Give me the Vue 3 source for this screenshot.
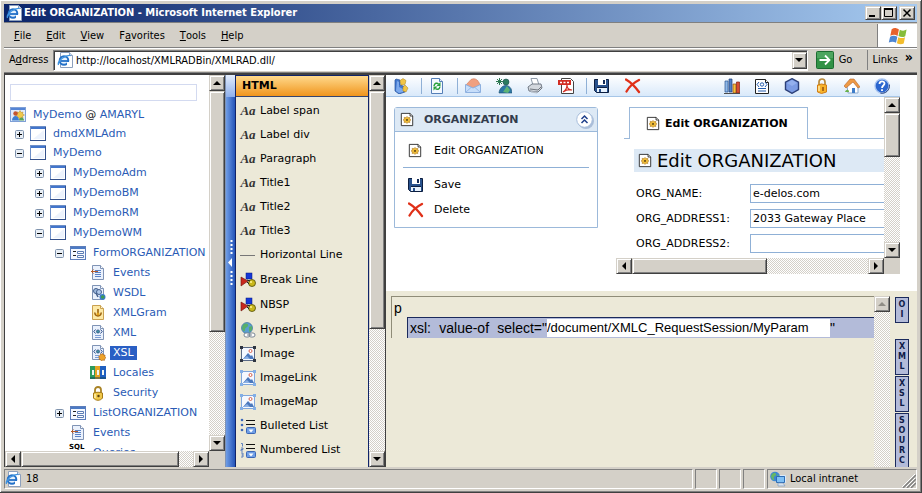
<script setup>
import { ref } from 'vue'

const page = '<path d="M2.500 .5h8l3 3v11h-11z" fill="#eaf1fc" stroke="#7f93b5"/><path d="M10.500 .5v3h3" fill="#fff" stroke="#7f93b5"/>'
const darkPage = '<path d="M1.500 1.500h10l3 3v11h-13z" fill="#fff" stroke="#222"/><path d="M11.500 1.500v3h3" fill="#fff" stroke="#222"/>'
const ieMark = '<circle cx="7" cy="8.500" r="4.300" fill="#e6f1fc" stroke="#2471c8" stroke-width="2"/><path d="M4 9h7.500" stroke="#2471c8" stroke-width="1.800"/><path d="M10 10h4v3h-4z" fill="#fff"/><path d="M1.500 13C0 9 8 3 13.500 3.500" fill="none" stroke="#3d93e0" stroke-width="1.300"/>'
const docLines = '<path d="M5 5.500h6M5 7.500h6M5 9.500h6M5 11.500h6" stroke="#5b83c7"/>'
const picture = (c, n) => `<rect x="1.500" y="1.500" width="13" height="13" fill="#f4f8ff" stroke="${c}"/><path d="M3 13l5-6 3 3 1-1 2 4z" fill="#4a78bd"/><path d="M3 13l4-3 3 3z" fill="#8cb1e5"/><circle cx="10.500" cy="5" r="1.500" fill="#fff" stroke="#d8624b"/><path d="M0 0h3v3H0zM13 0h3v3h-3zM0 13h3v3H0zM13 13h3v3h-3z" fill="${n}"/>`
const shapes = '<path d="M1 5l7 4-7 5z" fill="#c8281e" stroke="#6d120c" stroke-width=".6"/><rect x="6" y="1" width="6" height="6" fill="#1638d8" stroke="#06187a" stroke-width=".5"/><circle cx="12" cy="11" r="3.500" fill="#c9b81c" stroke="#4d4a08" stroke-width=".8"/><circle cx="11" cy="10" r="1.100" fill="#fff28c"/><path d="M7 8l3 1M7 10l2 2" stroke="#222"/>'
const listEnd = '<path d="M6 2.500h9M6 6.500h9" stroke="#111"/><rect x="6.500" y="9.500" width="9" height="6" rx="1" fill="#6f9ee6" stroke="#3b67b5"/><path d="M8.500 11.500h5l-2.500 3z" fill="#fff"/>'

const icons = {
  ie: '<path d="M3.500 .5h9l3 3v12h-12z" fill="#fff" stroke="#8da0bd"/><path d="M12.500 .5v3h3" fill="#dce7f5" stroke="#8da0bd"/>' + ieMark,
  flag: '<path d="M4 3.500C7 1.500 9 2 12 3.800L10.500 11C8 9.500 6 9.300 2.500 10.800z" fill="#e8622c"/><path d="M13 4.200c3 1.500 5 1.200 7.500-.2L19 11.200c-2.500 1.300-4.500 1.200-7.500-.1z" fill="#86bd3a"/><path d="M2.300 11.800C5 10.300 7.500 10.300 10.300 12L8.800 18.500C6 17 4 17 .8 18.300z" fill="#4e86d2"/><path d="M11.300 12.300c3 1.400 5 1.300 7.500 0l-1.500 7c-2.500 1.200-4.500 1.100-7.500-.3z" fill="#f3bd2d"/>',
  go: '<rect x=".5" y=".5" width="17" height="17" rx="1" fill="#329246" stroke="#1c6c31"/><path d="M1 1h16v6H1z" fill="#68b778" opacity=".5"/><path d="M3.500 9h10M9 4.500L13.500 9 9 13.500" fill="none" stroke="#fff" stroke-width="1.800"/>',
  demo: '<rect x=".5" y=".5" width="15" height="14" fill="#e2ecfb" stroke="#7fa0d6"/><path d="M1 1h14v2H1z" fill="#5585d5"/><path d="M10 3.500l1 2 2-.5-.5 2 2 1-2 1 .5 2-2-.5-1 2-1-2-2 .5.5-2-2-1 2-1-.5-2 2 .5z" fill="#f0c84a" stroke="#b98c24" stroke-width=".5"/><circle cx="5.500" cy="6.500" r="2.200" fill="#c3562f"/><path d="M2 13.500c0-6 7-6 7 0z" fill="#3e7ed0"/><path d="M9 13.500c0-4 5-4 5 0z" fill="#58a25a"/>',
  win: '<rect x=".5" y=".5" width="15" height="14" fill="#fff" stroke="#6e8fc7"/><path d="M1 1h14v2H1z" fill="#4275cb"/><path d="M0 14.500h16M15.500 1v14" stroke="#35528c"/><path d="M3 13l11-9v9z" fill="#edf3fd"/>',
  form: '<rect x=".5" y="1.500" width="15" height="13" fill="#f4f8ff" stroke="#5c7dbb"/><path d="M1 2h14v2H1z" fill="#4c7ac4"/><path d="M3 6.500h3M3 10.500h3" stroke="#222"/><path d="M7.500 6.500h6v2h-6zM7.500 10.500h6v2h-6z" fill="#fff" stroke="#5d7db4"/>',
  events: page + docLines + '<path d="M1 6.500h7M3.500 4.500l-2 2 2 2" stroke="#b25a2c" fill="none"/>',
  wsdl: page + '<circle cx="6" cy="6" r="2.500" fill="#9db8dd" stroke="#44608d"/><circle cx="9" cy="7" r="2.500" fill="#b0c9eb" stroke="#44608d"/><path d="M6 8l2 4" stroke="#44608d" stroke-width="1.500"/><circle cx="12.500" cy="12" r="3" fill="#3b7ad0"/><path d="M11 11l2-1 2 2-2 2-2-1z" fill="#3f9a55"/>',
  gram: '<path d="M2.500 .5h8l3 3v11h-11z" fill="#fde9a6" stroke="#c9a050"/><path d="M10.500 .5v3h3" fill="#fff6d8" stroke="#c9a050"/><path d="M8 4v5M5 7.500c-1 4.500 7 4.500 6 0" stroke="#9c6210" stroke-width="1.600" fill="none"/><circle cx="8" cy="9" r="1.500" fill="#e0a01c"/>',
  xml: page + '<path d="M5.500 4.500L3.800 6.500l1.700 2M10.500 4.500l1.700 2-1.700 2" stroke="#2d4f8a" fill="none"/><circle cx="8" cy="6.500" r="1.600" fill="#3c8fa0" stroke="#284a7c" stroke-width=".7"/><path d="M5 10.500h6M5 12.500h6" stroke="#7b9bd3"/>',
  xsl: page + '<path d="M5.500 4.500L3.800 6.500l1.700 2M10.500 4.500l1.700 2-1.700 2" stroke="#2d4f8a" fill="none"/><circle cx="8" cy="6.500" r="1.600" fill="#3c8fa0" stroke="#284a7c" stroke-width=".7"/><path d="M5 10.500h4M5 12.500h4" stroke="#7b9bd3"/><path d="M12.500 8.500l1 1.500 1.500 0 0 1.700 1 1-1.300 1-.2 1.600-1.700-.2-1.200.9-1-1.300-1.600-.4.400-1.600-.7-1.400 1.500-.8.500-1.600 1.600.4z" fill="#efa329" stroke="#a85f13" stroke-width=".6"/>',
  locales: '<path d="M0 1h5v13H0z" fill="#2d9a5d"/><path d="M5 1h5v13H5z" fill="#e5a324"/><path d="M10 1h6v13h-6z" fill="#1f5fc0"/><path d="M2 5h2v5H2zM7 5h2v5H7zM12 5h2v5h-2z" fill="#f0f6f4"/><path d="M0 12h16v2H0z" fill="#164a5e" opacity=".5"/>',
  lock: '<path d="M5 8V5c0-4 6-4 6 0v3" fill="none" stroke="#a98326" stroke-width="1.800"/><path d="M3.500 8c3-1 6-1 9 0v5c-2 3-7 3-9 0z" fill="#f0c84a" stroke="#a57a18"/><path d="M5 9v4" stroke="#fff2b0" stroke-width="1.500"/><circle cx="8.500" cy="11" r="1.200" fill="#5b430f"/>',
  line: '<path d="M0 8.500h15" stroke="#777"/>',
  shapes,
  link: '<circle cx="7" cy="6" r="5.500" fill="#5a9ed0" stroke="#3c7399" stroke-width=".7"/><path d="M3 3c3-3 6-1 5 1s-3 1-3 4-3 0-3-2zM9 5l3-1v4l-3 2z" fill="#57b06a"/><path d="M6 11h2a2 2 0 0 1 0 4H6a2 2 0 0 1 0-4zM11 11h2a2 2 0 0 1 0 4h-2a2 2 0 0 1 0-4z" fill="#fff" stroke="#7a8794"/><path d="M7 13h5" stroke="#7a8794"/>',
  image: picture('#5a6a86', '#2e3440'),
  imageLink: picture('#7fa6dc', '#82aee6'),
  bullets: '<circle cx="2" cy="2" r="1.300" fill="#3c68b8"/><circle cx="2" cy="7" r="1.300" fill="#3c68b8"/><circle cx="2" cy="12" r="1.300" fill="#3c68b8"/>' + listEnd,
  numbers: '<path d="M1 1.500h1.500v3M1 6h2v1.500H1V9h2M1 11h2v2H1.500M3 13v2H1" stroke="#3c68b8" fill="none" stroke-width=".8"/>' + listEnd,
  table: '<path d="M0 6.500h16M4 5l3 4M7 5l-3 4M9 9V5l2 3 2-3v4" stroke="#222" fill="none"/>',
  blue: '<path d="M3 1l4 1v5l6 2-1 5-6 2-4-3V2z" fill="#4379cf" stroke="#24529c" stroke-width=".7"/><path d="M4 3l2 1v5l4 2v3l-4 1-3-2z" fill="#7daaed"/><path d="M7 2.500l3-2 3 2-1 4-4 .5zM10 9l2-2 3 3-2 4-3-1z" fill="#f2c544" stroke="#aa8119" stroke-width=".5"/>',
  refresh: '<path d="M2.500 .5h8l3 3v12h-11z" fill="#f4f9ff" stroke="#557fb7"/><path d="M10.500 .5v3h3" fill="#e4eefb" stroke="#557fb7"/><path d="M5 8c.5-3 3-3.500 4.500-2M11 8.500c-.5 3-3 3.500-4.500 2" fill="none" stroke="#28a03b" stroke-width="1.500"/><path d="M11.500 4v4h-4zM4.500 12.500v-4h4z" fill="#28a03b"/>',
  mail: '<path d="M1 7l5-5.500c4-2 7 0 9 5.500l-7 3z" fill="#f0a080" stroke="#cf7650" stroke-width=".6"/><path d="M.5 6.500L8 10l7.500-3.500v8H.5z" fill="#c7defa" stroke="#8db0df"/><path d="M1 14l5-4.500M15 14l-5-4.500" stroke="#9bbbe6" fill="none"/>',
  people: '<circle cx="10" cy="4" r="3" fill="#2b7b60" stroke="#174b49" stroke-width=".6"/><path d="M3 15c1-10 13-10 13 0z" fill="#2c77a4" stroke="#174b6d" stroke-width=".6"/><path d="M7 14l4-6 3 4-2 3z" fill="#5db476"/><path d="M1 1l5 5M6 1L1 6M0 3.500h7M3.500 0v7" stroke="#2e7a52"/>',
  print: '<path d="M4 .5h6l2 6.500H6z" fill="#fff" stroke="#8f9aa8"/><path d="M1 9l4-3h9l1 4-4 4-9-1z" fill="#d3d8de" stroke="#737b86"/><path d="M3 11l8 1 3-3" stroke="#707780" fill="none"/><path d="M3 13l7 1v1l-6-1z" fill="#fff" stroke="#8f9aa8" stroke-width=".6"/>',
  pdf: '<path d="M3.500 .5h9l3 3v12h-12z" fill="#fff" stroke="#444"/><path d="M0 2h13v5H0z" fill="#d22d23"/><path d="M2 4.500h9" stroke="#fff" stroke-width="1.300" stroke-dasharray="2 1.500"/><path d="M5 14c3-2 4-5 4-7 0 3 2 5 5 5-3-1-6 0-9 2z" fill="none" stroke="#d22d23" stroke-width="1.200"/>',
  save: '<path d="M.5 1.500h14v13H2.500l-2-2z" fill="#28518c" stroke="#0c1e40"/><path d="M4 1h8v6H4z" fill="#fff"/><path d="M9 2h2v4H9z" fill="#132b57"/><path d="M3 9h10v5H3z" fill="#e8f2fd"/><path d="M3 9.500h10" stroke="#0c1e40"/><path d="M5 11h2v3H5z" fill="#28518c"/>',
  del: '<path d="M1 1.500c5 3 9 7 13 12.500M14 2C8 5 4 9 1.500 13.500" fill="none" stroke="#e03018" stroke-width="2.300" stroke-linecap="round"/>',
  books: '<path d="M1 3h3v11H1z" fill="#8fb8e8" stroke="#29558f" stroke-width=".7"/><path d="M5 1h3v13H5z" fill="#4f80c6" stroke="#213f76" stroke-width=".7"/><path d="M9 6h3v9H9z" fill="#f2c23b" stroke="#954410" stroke-width=".7"/><path d="M12.500 4h3v11h-3z" fill="#d84c31" stroke="#822110" stroke-width=".7"/><path d="M0 15.500h16" stroke="#4d4d4d"/>',
  code: darkPage + '<path d="M5 4L3 6.500 5 9M11 4l2 2.500L11 9" fill="none" stroke="#245cae"/><circle cx="8" cy="6.500" r="1.700" fill="#fff" stroke="#245cae"/><path d="M4 10.500h8M4 13h8" stroke="#245cae"/>',
  hex: '<path d="M8 .7l6.500 3.500v7.500L8 15.300 1.500 11.700V4.200z" fill="#7c9ce4" stroke="#2b3f78" stroke-width="1.400"/><path d="M8 2l5 3-5 3-5-3z" fill="#93b0ee"/>',
  padlock: '<path d="M5 8V4c0-4 6-4 6 0v4" fill="none" stroke="#b98a3b" stroke-width="1.700"/><path d="M3.500 7l4-1 5 1v7l-5 1.500-4-1.500z" fill="#f7b32c" stroke="#cf7d18"/><path d="M5 8v5" stroke="#ffe59c" stroke-width="1.600"/><path d="M9 9v4" stroke="#96510c" stroke-width="1.500"/>',
  house: '<path d="M3 8l6-5 5 6v6H4z" fill="#fff" stroke="#8ca9ce"/><path d="M0 8L6 1l4 0 6 8-2 1-5-6-7 6z" fill="#ee9a45" stroke="#b9652a" stroke-width=".6"/><path d="M8 10h3v5H8z" fill="#3e7dc9"/><path d="M1 14c1-3 4-3 4 0z" fill="#69b04a"/>',
  help: '<circle cx="8" cy="8" r="7" fill="#2b66cf" stroke="#a9c5f1" stroke-width="1.300"/><path d="M15.300 6.500a7.300 7.300 0 0 1-9 8.500" fill="none" stroke="#28427e"/><path d="M5.500 6c0-3.500 5-3.300 5-.5C10.500 7.500 8 7.500 8 10M8 11.300v1.800" fill="none" stroke="#fff" stroke-width="1.800"/>',
  net: '<path d="M6.500 4.500h9v7h-9z" fill="#57a3ec" stroke="#dbe9f8"/><circle cx="5" cy="5.500" r="4.800" fill="#3d86d6"/><path d="M1 5c2-5 6-3 5-1s-3 1-2 4-3 0-3-3zM7 3l2 2-1 3z" fill="#67b764"/><path d="M6.500 5.500h8v6h-8z" fill="#7fc0f5" stroke="#2e6db5"/><path d="M8 12h5l2 3H8z" fill="#d8e2ee" stroke="#7794b8" stroke-width=".6"/>',
  chip: darkPage + '<path d="M8 5l1.200 1.500 2-.5-.2 2 1.500 1-1.500 1 .2 2-2-.5L8 13l-1.200-1.500-2 .5.200-2L3.500 9 5 8l-.2-2 2 .5z" fill="#f0bd38" stroke="#b07a1c" stroke-width=".7"/><circle cx="8" cy="9" r="1" fill="#3c2b10"/>',
  sql: '<path d="M5 7h9v9H5z" fill="#f0d581" stroke="#b99836"/>',
}

const menus = [['', 'F', 'ile'], ['', 'E', 'dit'], ['', 'V', 'iew'], ['F', 'a', 'vorites'], ['', 'T', 'ools'], ['', 'H', 'elp']]

const tree = [
  { t: 'dmdXMLAdm', d: 1, i: 'win', e: '+' },
  { t: 'MyDemo', d: 1, i: 'win', e: '-' },
  { t: 'MyDemoAdm', d: 2, i: 'win', e: '+' },
  { t: 'MyDemoBM', d: 2, i: 'win', e: '+' },
  { t: 'MyDemoRM', d: 2, i: 'win', e: '+' },
  { t: 'MyDemoWM', d: 2, i: 'win', e: '-' },
  { t: 'FormORGANIZATION', d: 3, i: 'form', e: '-' },
  { t: 'Events', d: 4, i: 'events' },
  { t: 'WSDL', d: 4, i: 'wsdl' },
  { t: 'XMLGram', d: 4, i: 'gram' },
  { t: 'XML', d: 4, i: 'xml' },
  { t: 'XSL', d: 4, i: 'xsl', on: true },
  { t: 'Locales', d: 4, i: 'locales' },
  { t: 'Security', d: 4, i: 'lock' },
  { t: 'ListORGANIZATION', d: 3, i: 'form', e: '+' },
  { t: 'Events', d: 3, i: 'events' },
  { t: 'Queries', d: 3, i: 'sql' },
]

const palette = [
  ['aa', 'Label span'], ['aa', 'Label div'], ['aa', 'Paragraph'], ['aa', 'Title1'], ['aa', 'Title2'], ['aa', 'Title3'],
  ['line', 'Horizontal Line'], ['shapes', 'Break Line'], ['shapes', 'NBSP'], ['link', 'HyperLink'],
  ['image', 'Image'], ['imageLink', 'ImageLink'], ['imageLink', 'ImageMap'], ['bullets', 'Bulleted List'],
  ['numbers', 'Numbered List'], ['table', ''],
]
const tall = ['shapes', 'link']

const toolsLeft = [['blue'], ['refresh'], ['mail', 'people', 'print', 'pdf'], ['save', 'del']]
const toolsRight = ['books', 'code', 'hex', 'padlock', 'house', 'help']

const fields = ref([
  { id: 'ORG_NAME', v: 'e-delos.com' },
  { id: 'ORG_ADDRESS1', v: '2033 Gateway Place' },
  { id: 'ORG_ADDRESS2', v: '' },
])
const address = ref('http://localhost/XMLRADBin/XMLRAD.dll/')
const filter = ref('')
const param = ref('/document/XMLC_RequestSession/MyParam')
</script>

<template>
  <div class="window">
    <header class="titlebar">
      <svg class="ic" viewBox="0 0 16 16" v-html="icons.ie"></svg>
      <h1>Edit ORGANIZATION - Microsoft Internet Explorer</h1>
      <div class="winbtns">
        <button class="raised" aria-label="Minimize"><svg viewBox="0 0 12 10"><path d="M2 8h6" stroke="#000" stroke-width="2" /></svg></button>
        <button class="raised" aria-label="Maximize"><svg viewBox="0 0 12 10"><path d="M1.500 1v7.500h8V1M1 1h9" fill="none" stroke="#000" /><path d="M1 1h9" stroke="#000" stroke-width="2" /></svg></button>
        <button class="raised close" aria-label="Close"><svg viewBox="0 0 12 10"><path d="M2.500 1.500l7 7M9.500 1.500l-7 7" stroke="#000" stroke-width="1.500" /></svg></button>
      </div>
    </header>

    <nav class="menubar">
      <button v-for="m in menus" :key="m[2]">{{ m[0] }}<u>{{ m[1] }}</u>{{ m[2] }}</button>
      <div class="brand"><svg viewBox="0 0 22 21" v-html="icons.flag"></svg></div>
    </nav>

    <div class="addressbar">
      <label for="addr">A<u>d</u>dress</label>
      <div class="field">
        <svg class="ic" viewBox="0 0 16 16" v-html="icons.ie"></svg>
        <input id="addr" v-model="address" type="text">
        <button class="raised drop" aria-label="Show addresses"><i class="tri down"></i></button>
      </div>
      <button class="go"><svg viewBox="0 0 18 18" v-html="icons.go"></svg>Go</button>
      <button class="links">Links <b>»</b></button>
    </div>

    <main class="content">
      <section class="side">
        <div class="treeview">
          <input v-model="filter" class="filter" type="text" aria-label="Filter">
          <p class="root"><svg class="ic" viewBox="0 0 16 16" v-html="icons.demo"></svg><span><a href="#">MyDemo</a> @ <a href="#">AMARYL</a></span></p>
          <ul>
            <li v-for="(n, k) in tree" :key="k" :class="'d' + n.d">
              <button v-if="n.e" class="toggle" :aria-label="'Toggle ' + n.t">
                <svg viewBox="0 0 9 9"><rect x=".5" y=".5" width="8" height="8" rx="1" fill="#e8eef5" stroke="#7f93ad" /><path d="M2 4.500h5" stroke="#000" /><path v-if="n.e === '+'" d="M4.500 2v5" stroke="#000" /></svg>
              </button>
              <span v-else class="toggle"></span>
              <span class="nodeicon"><svg class="ic" viewBox="0 0 16 16" v-html="icons[n.i]"></svg><b v-if="n.i === 'sql'">SQL</b></span>
              <a href="#" :class="{ on: n.on }">{{ n.t }}</a>
            </li>
          </ul>
        </div>
        <div class="vbar">
          <button class="raised" aria-label="Up"><i class="tri up"></i></button>
          <div class="track"><div class="raised thumb t70"></div></div>
          <button class="raised" aria-label="Down"><i class="tri down"></i></button>
        </div>
        <div class="hbar">
          <button class="raised" aria-label="Left"><i class="tri left"></i></button>
          <div class="track"><div class="raised thumb t90"></div></div>
          <button class="raised" aria-label="Right"><i class="tri right"></i></button>
        </div>
      </section>

      <div class="splitter">
        <svg viewBox="0 0 8 48"><path d="M5.500 1v14M5.500 32v14" stroke="#fff" stroke-width="2" stroke-dasharray="2 2" /><path d="M6 19v9l-4-4.500z" fill="#fff" /></svg>
      </div>

      <section class="palette">
        <div class="palettebody">
          <h2>HTML</h2>
          <button v-for="(p, k) in palette" :key="k" class="pitem" :class="{ tall: tall.includes(p[0]) }" :aria-label="p[1] || 'More'">
            <em v-if="p[0] === 'aa'">Aa</em>
            <svg v-else class="ic" viewBox="0 0 16 16" v-html="icons[p[0]]"></svg>
            {{ p[1] }}
          </button>
        </div>
        <div class="vbar">
          <button class="raised" aria-label="Up"><i class="tri up"></i></button>
          <div class="track"><div class="raised thumb t66"></div></div>
          <button class="raised" aria-label="Down"><i class="tri down"></i></button>
        </div>
      </section>

      <section class="work">
        <div class="toolbar">
          <div v-for="(g, k) in toolsLeft" :key="k" class="tgroup">
            <button v-for="t in g" :key="t" :aria-label="t"><svg class="ic" viewBox="0 0 16 16" v-html="icons[t]"></svg></button>
          </div>
          <div class="tright">
            <button v-for="t in toolsRight" :key="t" :aria-label="t"><svg class="ic" viewBox="0 0 16 16" v-html="icons[t]"></svg></button>
          </div>
        </div>

        <div class="design">
          <aside class="card">
            <header>
              <svg class="chip" viewBox="0 0 16 17" v-html="icons.chip"></svg>
              <h3>ORGANIZATION</h3>
              <button class="fold" aria-label="Collapse"><svg viewBox="0 0 18 18"><circle cx="10" cy="10" r="8" fill="#8aa2c6" opacity=".6" /><circle cx="8.500" cy="8.500" r="7.800" fill="#fff" stroke="#a8bedc" /><path d="M5.500 8l3-3 3 3M5.500 12l3-3 3 3" fill="none" stroke="#1f3f8a" stroke-width="1.500" /></svg></button>
            </header>
            <div class="cardbody">
              <a href="#"><svg class="chip" viewBox="0 0 16 17" v-html="icons.chip"></svg>Edit ORGANIZATION</a>
              <hr>
              <button><svg class="ic" viewBox="0 0 16 16" v-html="icons.save"></svg>Save</button>
              <button><svg class="ic" viewBox="0 0 16 16" v-html="icons.del"></svg>Delete</button>
            </div>
          </aside>

          <div class="frame">
            <div class="view">
              <div class="tabs">
                <button class="tab"><svg class="chip" viewBox="0 0 16 17" v-html="icons.chip"></svg>Edit ORGANIZATION</button>
              </div>
              <h2><svg class="chip" viewBox="0 0 16 17" v-html="icons.chip"></svg>Edit ORGANIZATION</h2>
              <form>
                <template v-for="f in fields" :key="f.id">
                  <label :for="f.id">{{ f.id }}:</label>
                  <input :id="f.id" v-model="f.v" type="text">
                </template>
              </form>
            </div>
            <div class="vbar">
              <button class="raised" aria-label="Up"><i class="tri up"></i></button>
              <div class="track"><div class="raised thumb t34"></div></div>
              <button class="raised" aria-label="Down"><i class="tri down"></i></button>
            </div>
            <div class="hbar">
              <button class="raised" aria-label="Left"><i class="tri left"></i></button>
              <div class="track"><div class="raised thumb t57"></div></div>
              <button class="raised" aria-label="Right"><i class="tri right"></i></button>
            </div>
          </div>
        </div>

        <div class="editor">
          <div class="source">
            <div class="lines">
              <p>p</p>
              <div class="line">
                <label for="param"><span>xsl:</span><span>value-of</span> <span>select="</span></label>
                <input id="param" v-model="param" type="text">
                <span class="quote">"</span>
              </div>
            </div>
          </div>
          <div class="vbar">
            <button class="raised" aria-label="Up" disabled><i class="tri up"></i></button>
            <div class="track"></div>
          </div>
          <div class="sidetabs">
            <button class="oi">OI</button>
            <button>XML</button>
            <button>XSL</button>
            <button class="last">SOURC</button>
          </div>
        </div>
      </section>
    </main>

    <footer class="status">
      <span class="cell first"><svg class="ic" viewBox="0 0 16 16" v-html="icons.ie"></svg>18</span>
      <span class="cell"></span>
      <span class="cell"></span>
      <span class="cell"></span>
      <span class="cell zone"><svg class="ic" viewBox="0 0 16 16" v-html="icons.net"></svg>Local intranet
        <svg class="grip" viewBox="0 0 14 14"><path d="M1 14L14 1M5 14l9-9M9 14l5-5" stroke="#808080" stroke-width="1.500" /><path d="M0 13L13 0M4 13l9-9M8 13l5-5" stroke="#fff" /></svg>
      </span>
    </footer>
  </div>
</template>

<style>
html, body { margin: 0; overflow: hidden; }
</style>

<style scoped>
* { box-sizing: border-box; }
h1, h2, h3, p, ul { margin: 0; padding: 0; }
button, input { font: inherit; color: inherit; margin: 0; padding: 0; border: 0; border-radius: 0; background: none; outline: 0; }
button { display: flex; align-items: center; white-space: nowrap; }
a { text-decoration: none; color: inherit; }
svg { display: block; flex: none; }
.ic { width: 16px; height: 16px; }
.chip { width: 14px; height: 15px; }

.window {
  display: flex; flex-direction: column; height: 100vh; padding: 4px 4px 3px;
  background: #d4d0c8; color: #000;
  border-right: 1px solid #404040; border-bottom: 1px solid #404040;
  box-shadow: inset 1px 1px #fff, inset -1px -1px #808080;
  font: 11px/14px "DejaVu Sans Condensed", "DejaVu Sans", sans-serif;
}
.raised {
  background: #d4d0c8; justify-content: center;
  border: 1px solid; border-color: #d4d0c8 #404040 #404040 #d4d0c8;
  box-shadow: inset 1px 1px #fff, inset -1px -1px #808080;
}

.titlebar { display: flex; align-items: center; flex: none; height: 18px; padding: 0 2px; gap: 2px; background: linear-gradient(90deg, #0a246a, #a6caf0); }
.titlebar h1 { flex: 1; font-size: 11px; font-weight: bold; color: #fff; }
.winbtns { display: flex; }
.winbtns button { width: 16px; height: 14px; }
.winbtns .close { margin-left: 2px; }
.winbtns svg { width: 12px; height: 10px; }

.menubar { display: flex; flex: none; align-items: center; height: 26px; padding: 1px 0 0 9px; gap: 13px; border-bottom: 1px solid #808080; border-top: 1px solid #808080; }
.menubar button { padding: 0 1px; }
.brand { display: grid; place-items: center; align-self: stretch; margin-left: auto; width: 40px; background: #fff; border-left: 1px solid #808080; }
.brand svg { width: 20px; height: 19px; }

.addressbar { display: flex; flex: none; align-items: center; height: 25px; padding: 0 3px 1px 5px; border-top: 1px solid #fff; border-bottom: 1px solid #808080; }
.addressbar label { width: 44px; }
.field { display: flex; flex: 1; align-items: center; height: 21px; padding: 0 0 0 3px; gap: 3px; background: #fff; border: 1px solid; border-color: #808080 #fff #fff #808080; box-shadow: inset 1px 1px #404040; }
.field input { flex: 1; height: 16px; }
.drop { width: 15px; height: 17px; }
.go { gap: 5px; padding: 0 11px 0 8px; }
.go svg { width: 18px; height: 18px; }
.links { gap: 7px; height: 20px; margin-left: 4px; padding: 0 1px 0 4px; border-left: 1px solid #808080; }
.links b { font-size: 14px; line-height: 10px; padding-bottom: 6px; }

.tri { display: block; width: 0; height: 0; border: 4px solid transparent; }
.tri.up { border-top: 0; border-bottom-color: #000; }
.tri.down { border-bottom: 0; border-top-color: #000; }
.tri.left { border-left: 0; border-right-color: #000; }
.tri.right { border-right: 0; border-left-color: #000; }

.content { display: flex; flex: 1; min-height: 0; border: solid; border-width: 2px 0 0 1px; border-color: #404040 #fff #fff #404040; background: #fff; }

.vbar, .hbar { display: flex; flex: none; background: #d4d0c8; }
.vbar { flex-direction: column; width: 16px; }
.hbar { height: 16px; }
.vbar button, .hbar button { flex: none; width: 16px; height: 16px; }
.vbar button:disabled .tri { border-bottom-color: #908d86; }
.track { display: flex; flex: 1; min-height: 0; background: repeating-conic-gradient(#fff 0 25%, #d4d0c8 0 50%) 0 0 / 2px 2px; }
.vbar .track { flex-direction: column; }
.vbar .thumb { width: 100%; }
.vbar .t70 { height: 70%; }
.vbar .t66 { height: 66%; }
.vbar .t34 { height: 34%; }
.hbar .t90 { width: 92%; }
.hbar .t57 { width: 57%; }

.side { display: grid; flex: none; width: 220px; grid-template-columns: minmax(0, 1fr) 16px; grid-template-rows: minmax(0, 1fr) 16px; background: #d4d0c8; }
.treeview { overflow: hidden; padding: 9px 4px 0 5px; background: #fff; color: #2a5bb5; font-family: "DejaVu Sans", sans-serif; }
.filter { display: block; width: 187px; height: 17px; border: 1px solid #d3daf0; color: #000; }
.root { display: flex; align-items: center; height: 20px; margin-top: 4px; gap: 7px; color: #222; }
.root a { color: #2a5bb5; }
ul { list-style: none; }
li { display: flex; align-items: center; height: 20px; white-space: nowrap; }
li:first-child { height: 18px; }
.toggle { flex: none; width: 9px; height: 9px; }
.toggle svg { width: 9px; height: 9px; }
.d1 { padding-left: 5px; }
.d2 { padding-left: 25px; }
.d3 { padding-left: 45px; }
.d4 { padding-left: 65px; }
.nodeicon { position: relative; margin: 0 4px 0 6px; }
.nodeicon b { position: absolute; left: -1px; top: -2px; font-size: 7px; line-height: 8px; color: #000; }
li a { padding: 0 3px; }
li a.on { background: #2a5fc4; color: #fff; }

.splitter { display: flex; flex: none; align-items: center; width: 10px; padding-bottom: 16px; background: linear-gradient(#e3edfc, #8fb0ec) 0 0 / 100% 22px no-repeat, linear-gradient(90deg, #6f9de6, #2454b8); border-left: 1px solid #7f93b5; }
.splitter svg { width: 8px; height: 48px; }

.palette { display: flex; flex: none; width: 150px; background: #ece9d8; border-left: 1px solid #10246a; }
.palettebody { flex: 1; overflow: hidden; border-right: 1px solid #10246a; font-family: "DejaVu Sans", sans-serif; }
.palette h2 { height: 22px; margin-bottom: 2px; padding-left: 6px; font-size: 11px; line-height: 20px; border-top: 1px solid #10246a; border-bottom: 1px solid #35456f; background: linear-gradient(#ffd98c, #f0951d); }
.pitem { height: 24px; padding-left: 4px; gap: 4px; }
.pitem.tall { height: 25px; }
.pitem em { width: 16px; font: italic bold 13px/14px "Liberation Serif", serif; color: #333; }

.work { display: grid; flex: 1; min-width: 0; grid-template-rows: 22px minmax(0, 194fr) minmax(0, 176fr); border-left: 1px solid #404040; }
.toolbar { display: flex; align-items: center; margin-right: 17px; background: linear-gradient(#fff, #d9e9fa); border-bottom: 1px solid #a6c6e8; }
.tgroup { display: flex; gap: 15px; padding: 0 12px 0 7px; }
.tgroup + .tgroup { border-left: 1px solid #8fb0d6; }
.tright { display: flex; gap: 14px; margin-left: auto; padding-right: 10px; }

.design { display: flex; align-items: flex-start; padding: 0 17px 17px 8px; gap: 18px; font-family: "DejaVu Sans", sans-serif; }
.card { flex: none; width: 204px; margin-top: 10px; border: 1px solid #9cb9da; border-radius: 3px 3px 0 0; }
.card header { display: flex; align-items: center; height: 24px; padding: 0 3px 0 5px; gap: 10px; background: #dde9f5; border-bottom: 1px solid #9cb9da; }
.card h3 { flex: 1; font-size: 11px; color: #333c4c; }
.fold svg { width: 18px; height: 18px; }
.cardbody { display: flex; flex-direction: column; padding: 6px 8px 5px; }
.cardbody a, .cardbody button { display: flex; align-items: center; height: 25px; padding-left: 5px; gap: 10px; }
.cardbody a { gap: 12px; }
.cardbody hr { width: 100%; height: 1px; margin: 4px 0; border: 0; background: #8fb0d6; }

.frame { display: grid; flex: 1; min-width: 0; height: 100%; grid-template-columns: minmax(0, 1fr) 16px; grid-template-rows: minmax(0, 1fr) 16px; background: #d4d0c8; }
.view { overflow: hidden; padding: 10px 0 0 8px; background: #fff; }
.tabs { display: flex; height: 32px; padding-left: 5px; background: linear-gradient(#9cb9da, #9cb9da) 0 100% / 100% 1px no-repeat; }
.tab { gap: 5px; padding: 0 19px 0 16px; font-weight: bold; background: #fff; border: solid #9cb9da; border-width: 1px 1px 0; }
.view h2 { display: flex; align-items: center; height: 23px; margin: 10px 0 0 10px; padding-left: 4px; gap: 5px; font-size: 18px; line-height: 22px; font-weight: normal; background: #dde9f5; white-space: nowrap; }
.view form { display: grid; grid-template-columns: 104px 200px; grid-auto-rows: 19px; align-items: center; gap: 6px 10px; margin: 12px 0 0 12px; }
.view form input { width: 200px; height: 19px; padding-left: 2px; border: 1px solid #8fb0d6; }

.editor { display: flex; min-height: 0; padding: 5px 8px 0 5px; background: #ece9d8; overflow: hidden; }
.source { flex: 1; min-width: 0; border-top: 1px solid #8f8c78; font: 14px/18px "Liberation Sans", sans-serif; }
.lines { border-left: 1px solid #8f8c78; }
.lines p { height: 20px; padding: 2px 0 0 2px; }
.line { display: flex; align-items: center; height: 21px; margin-left: 15px; padding-left: 2px; background: #b3bbd9; border: solid #1b2a5c; border-width: 1px 0 0 1px; }
.line label { display: flex; justify-content: space-between; width: 137px; }
.line input { flex: 1; min-width: 0; height: 18px; background: #fff; font-size: 13px; }
.quote { width: 44px; }
.sidetabs { display: flex; flex-direction: column; flex: none; gap: 1px; padding: 1px 0 0 5px; }
.sidetabs button { flex: none; align-items: flex-start; justify-content: center; width: 14px; padding: 2px; white-space: normal; word-break: break-all; font: bold 8px/10px "DejaVu Sans", sans-serif; background: #b3bbd9; border: 1px solid #1b2a5c; color: #101c48; }
.sidetabs button.oi { margin-bottom: 15px; }
.sidetabs button.last { flex: 1; padding-bottom: 0; border-bottom: 0; }

.status { display: flex; flex: none; gap: 2px; height: 22px; padding-top: 2px; }
.cell { display: flex; align-items: center; width: 22px; gap: 5px; border: 1px solid; border-color: #808080 #fff #fff #808080; }
.first { flex: 1; }
.zone { width: 150px; padding-left: 2px; gap: 4px; }
.grip { width: 14px; height: 14px; margin-left: auto; align-self: flex-end; }
</style>
